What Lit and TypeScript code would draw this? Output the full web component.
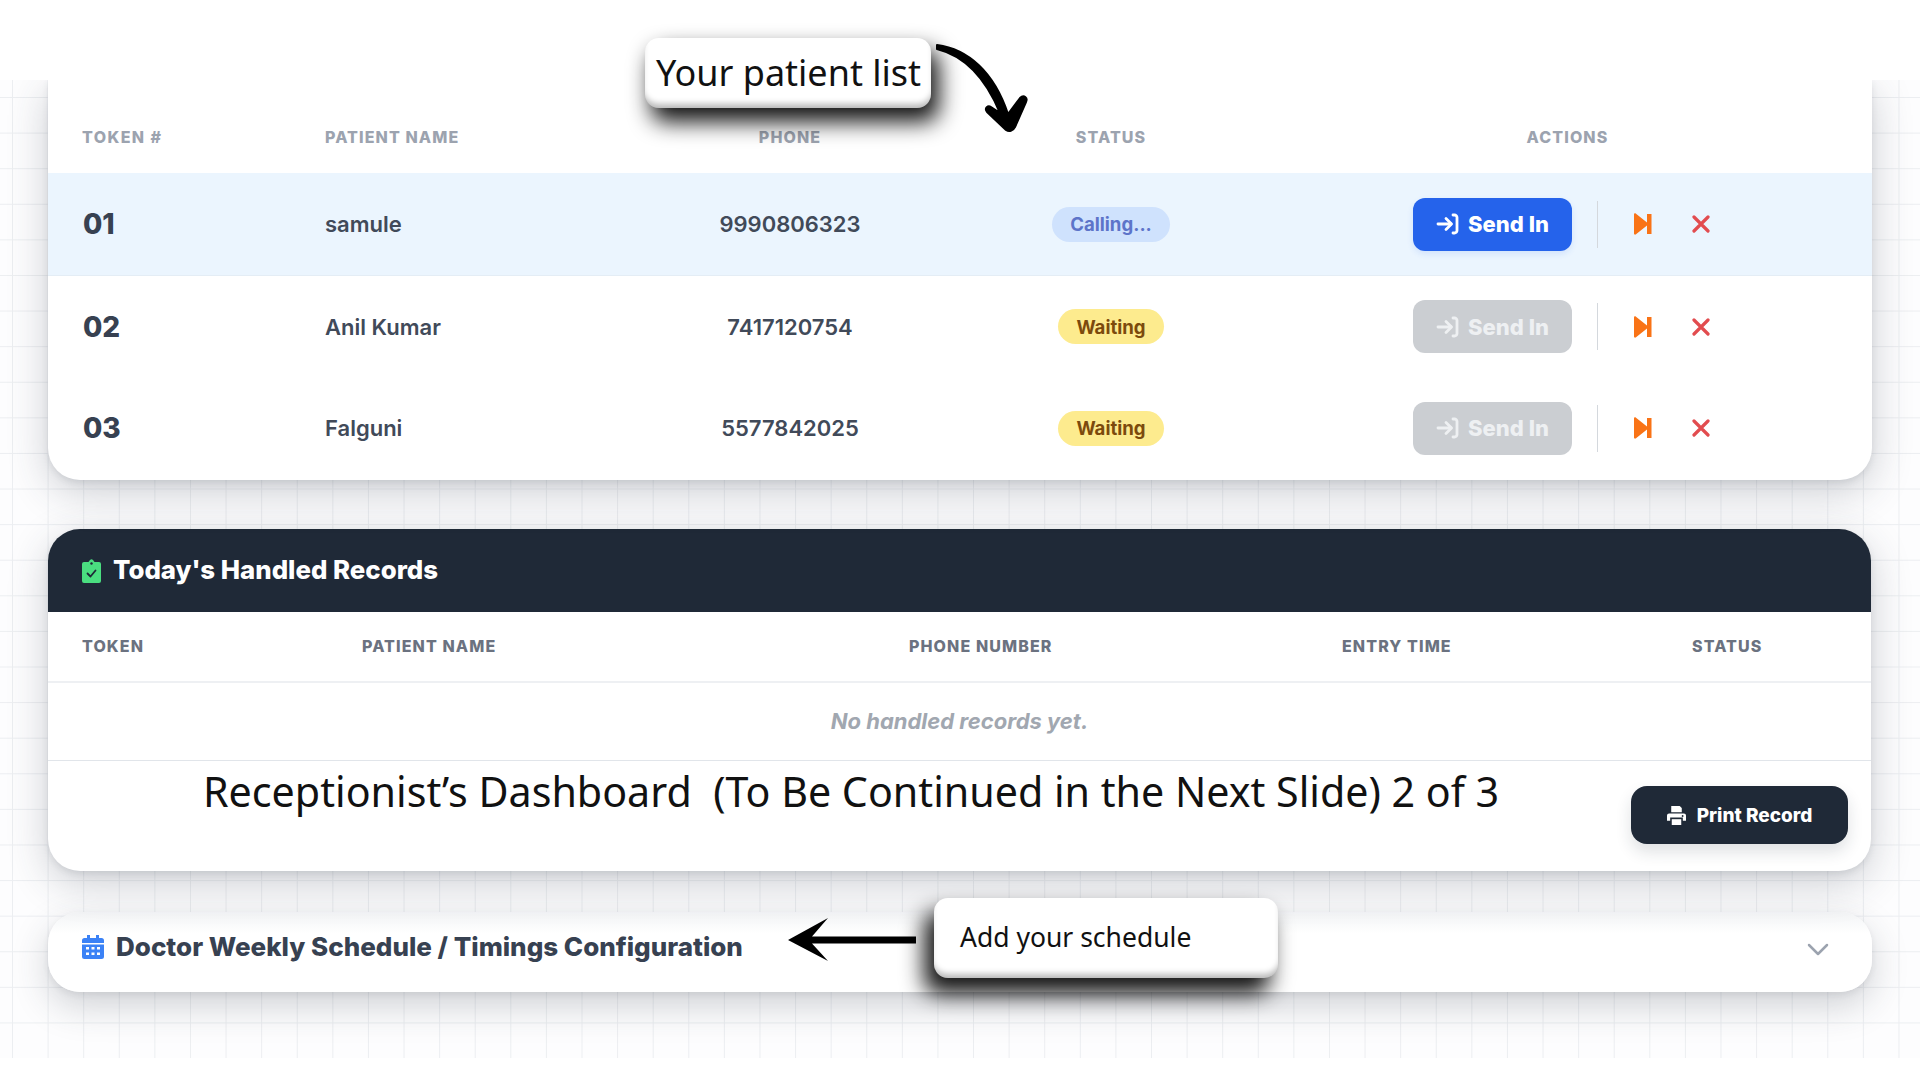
import { LitElement, html, css, svg } from "lit";
import { customElement } from "lit/decorators.js";

const enterIcon = svg`<svg class="ic" viewBox="0 0 24 24" width="24" height="24" fill="none" stroke="currentColor" stroke-width="2.8" stroke-linecap="round" stroke-linejoin="round"><path d="M2 12h13"/><path d="M10 6.500 15.500 12 10 17.500"/><path d="M17 3h1.500A2.500 2.500 0 0 1 21 5.500v13a2.500 2.500 0 0 1-2.500 2.500H17"/></svg>`;

const rows = [
  { t: "01", n: "samule", p: "9990806323", s: "Calling...", calling: true },
  { t: "02", n: "Anil Kumar", p: "7417120754", s: "Waiting", calling: false },
  { t: "03", n: "Falguni", p: "5577842025", s: "Waiting", calling: false },
];

@customElement("app-root")
export class AppRoot extends LitElement {
  static styles = css`
    :host { display: block; width: 1920px; height: 1080px; position: relative; overflow: hidden; background: #fff; font-family: Inter, "Liberation Sans", sans-serif; color: #374151; }
    .canvas { position: absolute; z-index: 0; left: 0; right: 0; top: 80px; height: 978px; background-color: #fdfdfe; overflow: hidden;
      background-image: linear-gradient(#eceef1 1px, transparent 1px), linear-gradient(90deg, #eceef1 1px, transparent 1px);
      background-size: 35.6px 35.6px; background-position: 12px 17px; }
    .page { position: relative; display: flex; flex-direction: column; padding: 0 48px 0 48px; }
    .card { background: #fff; box-shadow: 0 12px 40px rgba(45,55,70,.24), 0 3px 6px rgba(45,55,70,.1); }
    .queue { height: 400px; border-radius: 0 0 32px 32px; position: relative; z-index: 2; }
    .grid-q { display: grid; grid-template-columns: 277px 295px 340px 302px 1fr; align-items: center; }
    .thead { height: 93px; padding-top: 20px; box-sizing: border-box; }
    .th { font-size: 16px; font-weight: 800; letter-spacing: 1.1px; color: #9ca3af; white-space: nowrap; }
    .c { text-align: center; }
    .act { padding-left: 1px; }
    .first { padding-left: 34px; letter-spacing: 1.4px; }
    .row { height: 102px; box-sizing: border-box; }
    .row.active { height: 103px; background: #ebf5fe; border-bottom: 1px solid #e4edf5; }
    .row.active + .row { height: 101px; }
    .tok { font-size: 28px; font-weight: 800; color: #374151; padding-left: 35px; }
    .name, .phone { font-size: 22px; font-weight: 600; color: #414a59; }
    .phone { text-align: center; }
    .pill { display: inline-flex; align-items: center; height: 35px; padding: 0 18px; border-radius: 18px; font-size: 18.600px; font-weight: 700; }
    .pill.calling { background: #cfe2fd; color: #5d74c9; }
    .pill.waiting { background: #fdeb8e; color: #7c4a0c; }
    .acts { display: flex; align-items: center; padding-left: 151px; }
    .send { width: 159px; height: 53px; border-radius: 12px; display: flex; align-items: center; justify-content: center; gap: 8px; font-size: 22px; font-weight: 800; color: #fff; background: #2563eb; box-shadow: 0 3px 6px rgba(37,99,235,.12); }
    .send.off { background: #cbced2; color: #eef0f2; box-shadow: none; }
    .divider { width: 1px; height: 47px; background: #d4d8dd; margin: 0 36px 0 25px; }
    .skip { display: block; margin-right: 40px; }
    .x { display: block; }
    .records { margin-top: 49px; margin-right: 1px; height: 342px; border-radius: 32px; display: flex; flex-direction: column; position: relative; z-index: 1; }
    .rhead { height: 83px; background: #1f2937; border-radius: 32px 32px 0 0; display: flex; align-items: center; padding: 0 0 0 34px; gap: 12px; color: #fff; font-size: 25.800px; font-weight: 800; box-sizing: border-box; }
    .rhead span { margin-top: -2px; }
    .grid-r { display: grid; grid-template-columns: 280px 547px 433px 350px 1fr; align-items: center; height: 71px; padding-bottom: 2px; border-bottom: 2px solid #eef0f3; box-sizing: border-box; }
    .grid-r .th { color: #6b7280; padding-left: 34px; }
    .empty { height: 78px; display: flex; align-items: center; justify-content: center; padding-bottom: 2px; font-size: 22px; font-weight: 700; font-style: italic; color: #a1a7b0; border-bottom: 1px solid #e1e5ea; box-sizing: border-box; }
    .rfoot { flex: 1; display: flex; justify-content: flex-end; align-items: center; padding: 0 23px 2px 0; }
    .print { width: 217px; height: 58px; border-radius: 16px; background: #1f2937; color: #fff; display: flex; align-items: center; justify-content: center; gap: 11px; font-size: 19px; font-weight: 800; box-shadow: 0 8px 16px rgba(31,41,55,.14); }
    .sched { margin-top: 41px; height: 80px; border-radius: 32px; display: flex; align-items: center; padding: 0 43px 11px 34px; gap: 12px; font-size: 26px; font-weight: 800; color: #374151; box-sizing: border-box; background: linear-gradient(#f3f4f6, #fff 22px); box-shadow: 0 14px 36px rgba(45,55,70,.22), 0 3px 6px rgba(45,55,70,.08); }
    .sched .t { flex: 1; }
    .sched .ch { margin-top: 5px; }
    .note { position: absolute; z-index: 1; background: #fff; color: #111; font-family: "Noto Sans", sans-serif; display: flex; align-items: center; box-sizing: border-box; }
    .n1 { left: 645px; top: 38px; width: 286px; height: 70px; border-radius: 14px; justify-content: center; font-size: 36px; padding-left: 1px; padding-bottom: 2px; box-shadow: inset 0 -7px 6px -3px rgba(0,0,0,.28), 7px 13px 22px 1px rgba(0,0,0,.92); }
    .n2 { left: 934px; top: 898px; width: 344px; height: 80px; border-radius: 14px; padding-left: 26px; padding-bottom: 2px; font-size: 26.500px; box-shadow: inset 0 -7px 6px -3px rgba(0,0,0,.28), -9px 15px 22px 1px rgba(0,0,0,.92); }
    .caption { position: absolute; z-index: 1; left: 203px; top: 763px; font-family: "Noto Sans", sans-serif; font-size: 41.200px; line-height: 56px; color: #111; white-space: pre; }
    .arrow { position: absolute; z-index: 2; left: 0; top: 0; pointer-events: none; }
  `;

  private queueRow(r: (typeof rows)[number]) {
    return html`<div class="grid-q row ${r.calling ? "active" : ""}">
      <div class="tok">${r.t}</div>
      <div class="name">${r.n}</div>
      <div class="phone">${r.p}</div>
      <div class="c"><span class="pill ${r.calling ? "calling" : "waiting"}">${r.s}</span></div>
      <div class="acts">
        <div class="send ${r.calling ? "" : "off"}">${enterIcon}<span>Send In</span></div>
        <div class="divider"></div>
        <svg class="skip" width="18" height="22" viewBox="0 0 18 22" fill="#f97316"><path d="M0 1.500C0 .5 1 0 2 .7L13 9.500V1h4.500v20H13v-8.500L2 21.300C1 22 0 21.500 0 20.500z"/></svg>
        <svg class="x" width="18" height="18" viewBox="0 0 18 18" fill="none" stroke="#e24c4f" stroke-width="3.200" stroke-linecap="round"><path d="M2 2l14 14M16 2 2 16"/></svg>
      </div>
    </div>`;
  }

  render() {
    return html`
      <div class="canvas">
        <div class="page">
          <section class="card queue">
            <div class="grid-q thead">
              <div class="th first">TOKEN #</div><div class="th">PATIENT NAME</div><div class="th c">PHONE</div><div class="th c">STATUS</div><div class="th c act">ACTIONS</div>
            </div>
            ${rows.map((r) => this.queueRow(r))}
          </section>
          <section class="card records">
            <div class="rhead">
              <svg width="19" height="24" viewBox="0 0 19 24"><path fill="#4ade80" d="M2 3h4.500L8 1a2 2 0 0 1 3 0l1.500 2H17a2 2 0 0 1 2 2v17a2 2 0 0 1-2 2H2a2 2 0 0 1-2-2V5a2 2 0 0 1 2-2z"/><circle cx="9.500" cy="4.500" r="1.200" fill="#1f2937"/><path d="M5.500 14.500l3 3 5-6" fill="none" stroke="#1f2937" stroke-width="1.800" stroke-linecap="round" stroke-linejoin="round"/></svg>
              <span>Today's Handled Records</span>
            </div>
            <div class="grid-r">
              <div class="th">TOKEN</div><div class="th">PATIENT NAME</div><div class="th">PHONE NUMBER</div><div class="th">ENTRY TIME</div><div class="th">STATUS</div>
            </div>
            <div class="empty">No handled records yet.</div>
            <div class="rfoot">
              <div class="print">
                <svg width="19" height="19" viewBox="0 0 18 18" fill="#fff"><path d="M4 0h8l2 2v4H4z"/><path d="M2 7h14a2 2 0 0 1 2 2v5h-3v-3H3v3H0V9a2 2 0 0 1 2-2z"/><path d="M4.500 12.500h9V18h-9z"/><circle cx="14.800" cy="9.500" r=".9" fill="#1f2937"/></svg>
                <span>Print Record</span>
              </div>
            </div>
          </section>
          <section class="card sched">
            <svg width="22" height="24" viewBox="0 0 22 24" fill="#3b82f6"><path d="M5 0h3v3h6V0h3v3h2.500A2.500 2.500 0 0 1 22 5.500V8H0V5.500A2.500 2.500 0 0 1 2.500 3H5z"/><path fill-rule="evenodd" d="M0 9.500h22v12a2.500 2.500 0 0 1-2.500 2.500h-17A2.500 2.500 0 0 1 0 21.500zM4 12v2.500h3V12zm5.500 0v2.500h3V12zm5.500 0v2.500h3V12zM4 17.500V20h3v-2.500zm5.500 0V20h3v-2.500zm5.500 0V20h3v-2.500z"/></svg>
            <span class="t">Doctor Weekly Schedule / Timings Configuration</span>
            <svg class="ch" width="22" height="14" viewBox="0 0 22 14" fill="none" stroke="#9ca3af" stroke-width="2.500" stroke-linecap="round" stroke-linejoin="round"><path d="M2 3l9 9 9-9"/></svg>
          </section>
        </div>
      </div>
      <div class="caption">Receptionist’s Dashboard  (To Be Continued in the Next Slide) 2 of 3</div>
      <div class="note n1">Your patient list</div>
      <div class="note n2">Add your schedule</div>
      <svg class="arrow" width="1920" height="1080" viewBox="0 0 1920 1080" fill="#000">
        <path d="M937 45C968 49 994 72 1008 114L1020 98C1024 94 1028 98 1026 102L1015 127C1013 131 1009 132 1006 130L987 112C984 108 988 105 991 107L1000 113C986 79 965 56 937 49Z" stroke="#000" stroke-width="2" stroke-linejoin="round"/>
        <path d="M788 940 828 918 812 936.500H916V943.500H812L828 961Z"/>
      </svg>
    `;
  }
}
